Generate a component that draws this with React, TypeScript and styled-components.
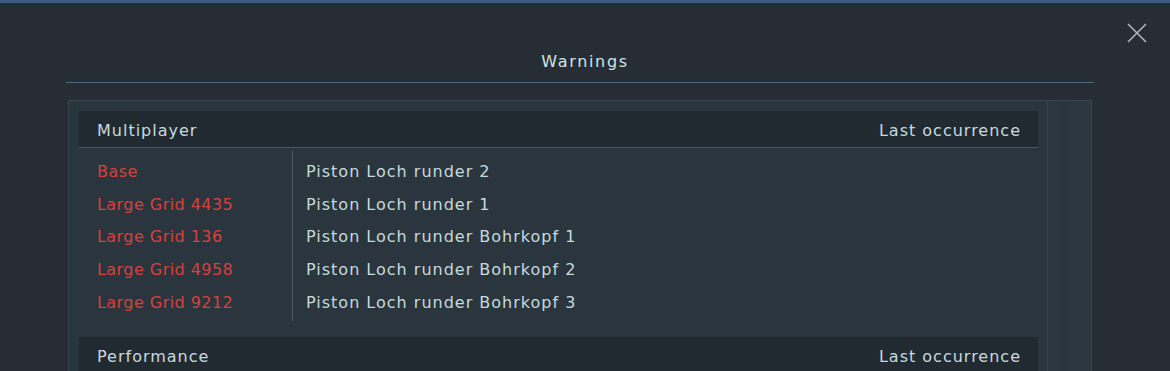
import styled, { createGlobalStyle } from 'styled-components';

const GlobalStyle = createGlobalStyle`
	html, body {
		margin: 0;
		padding: 0;
		background: #262d35;
		overflow: hidden;
	}
	body {
		font-family: 'DejaVu Sans', 'Liberation Sans', sans-serif;
	}
`;

const colors = {
	bg: '#262d35',
	panel: '#2a353d',
	header: '#222a31',
	text: '#c6dade',
	red: '#d8403d',
	line: '#4f6a7a',
	border: '#38444e',
};

const TopStrip = styled.div`
	height: 3px;
	background: #3b5a7e;
`;

const Dialog = styled.div`
	position: relative;
	height: 368px;
	overflow: hidden;
`;

const Title = styled.h1`
	margin: 0;
	padding-top: 49px;
	height: 30px;
	text-align: center;
	font-size: 16px;
	font-weight: normal;
	letter-spacing: 1.7px;
	color: #d4e2e4;
`;

const CloseButton = styled.button`
	position: absolute;
	top: 19px;
	right: 22px;
	width: 22px;
	height: 22px;
	padding: 0;
	border: none;
	background: none;
	cursor: pointer;
`;

const Divider = styled.hr`
	margin: 0 76px 0 66px;
	border: none;
	height: 1px;
	background: ${colors.line};
`;

const Panel = styled.div`
	display: flex;
	margin: 17px 78px 0 68px;
	height: 300px;
	border: 1px solid ${colors.border};
	border-bottom: none;
	background: ${colors.panel};
`;

const Content = styled.div`
	flex: 1;
	padding: 10px 9px 0 10px;
`;

const Scrollbar = styled.div`
	width: 43px;
	border-left: 1px solid ${colors.border};
	background: linear-gradient(90deg, #2c373f 0, #2c373f 10px, #2a353d 10px, #2a353d 22px, #2c3840 22px);
`;

const Section = styled.section`
	margin-bottom: 15.5px;
`;

const SectionHeader = styled.div`
	display: flex;
	justify-content: space-between;
	align-items: center;
	height: 37px;
	padding: 3px 17px 0 18px;
	box-sizing: border-box;
	background: ${colors.header};
	border-bottom: 1px solid #4a5a68;
	font-size: 16px;
	color: ${colors.text};
	letter-spacing: 1px;
`;

const Rows = styled.div`
	display: grid;
	grid-template-columns: 214px 1fr;
	padding-top: 3px;
`;

const NameColumn = styled.div`
	padding: 3px 0 4px;
	border-right: 1px solid #4a5a66;
`;

const BlockColumn = styled.div`
	padding: 3px 0 4px;
`;

const Cell = styled.div<{ $warn?: boolean }>`
	height: 32.7px;
	line-height: 36px;
	padding-left: ${({ $warn }) => ($warn ? '18px' : '13px')};
	font-size: 16px;
	letter-spacing: ${({ $warn }) => ($warn ? '0.45px' : '1px')};
	white-space: nowrap;
	color: ${({ $warn }) => ($warn ? colors.red : colors.text)};
`;

type Warning = { grid: string; block: string };

const multiplayer: Warning[] = [
	{ grid: 'Base', block: 'Piston Loch runder 2' },
	{ grid: 'Large Grid 4435', block: 'Piston Loch runder 1' },
	{ grid: 'Large Grid 136', block: 'Piston Loch runder Bohrkopf 1' },
	{ grid: 'Large Grid 4958', block: 'Piston Loch runder Bohrkopf 2' },
	{ grid: 'Large Grid 9212', block: 'Piston Loch runder Bohrkopf 3' },
];

const WarningSection = ({ title, items }: { title: string; items: Warning[] }) => (
	<Section>
		<SectionHeader>
			<span>{title}</span>
			<span>Last occurrence</span>
		</SectionHeader>
		{items.length > 0 && (
			<Rows>
				<NameColumn>
					{items.map((w) => (
						<Cell $warn key={w.grid}>
							{w.grid}
						</Cell>
					))}
				</NameColumn>
				<BlockColumn>
					{items.map((w) => (
						<Cell key={w.block}>{w.block}</Cell>
					))}
				</BlockColumn>
			</Rows>
		)}
	</Section>
);

const App = () => (
	<>
		<GlobalStyle />
		<TopStrip />
		<Dialog>
			<Title>Warnings</Title>
			<CloseButton aria-label='Close'>
				<svg width='22' height='22' viewBox='0 0 22 22'>
					<path d='M2 2 L20 20 M20 2 L2 20' stroke='#aab8bc' strokeWidth='1.6' />
				</svg>
			</CloseButton>
			<Divider />
			<Panel>
				<Content>
					<WarningSection title='Multiplayer' items={multiplayer} />
					<WarningSection title='Performance' items={[]} />
				</Content>
				<Scrollbar />
			</Panel>
		</Dialog>
	</>
);

export default App;
